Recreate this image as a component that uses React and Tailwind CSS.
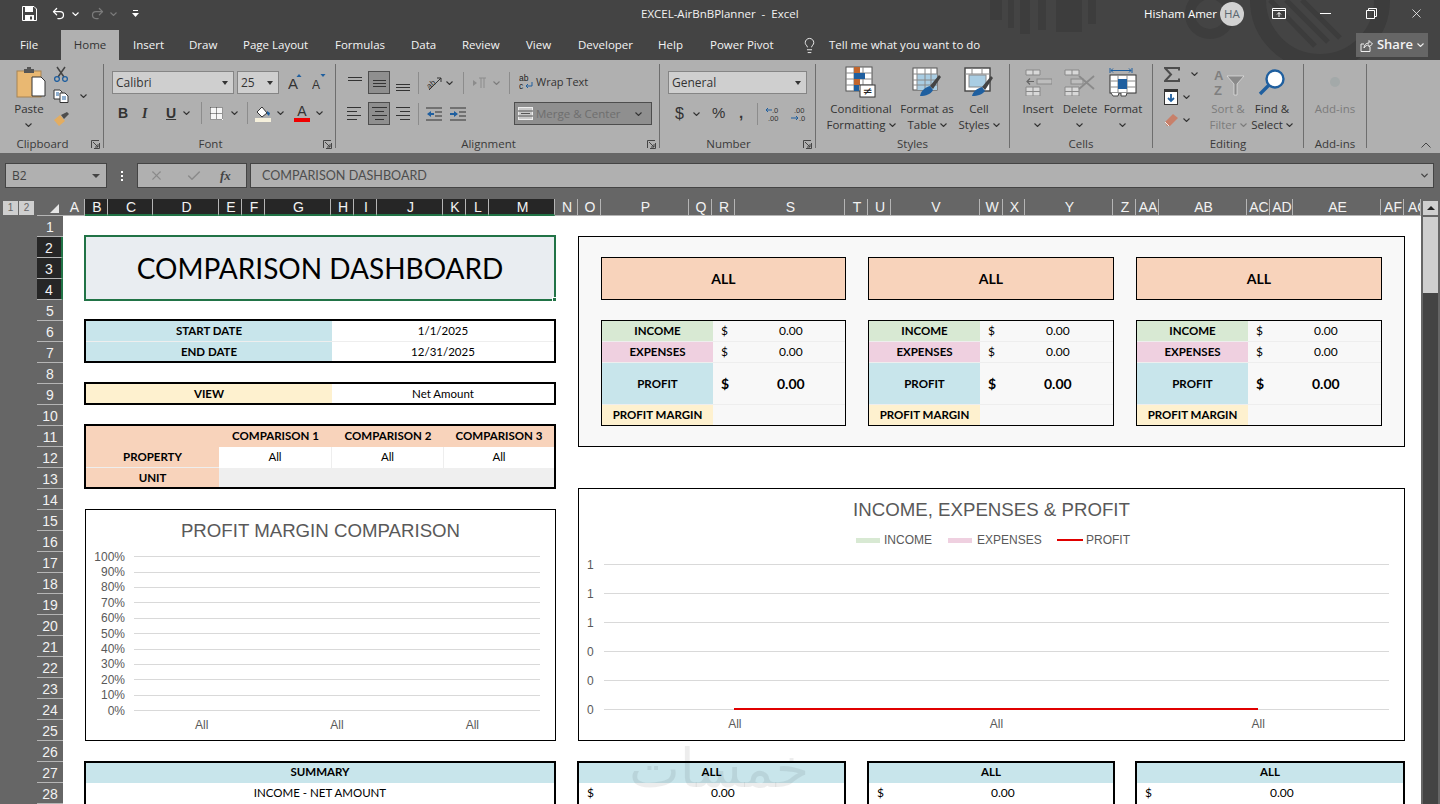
import { ChevronDown, Undo2, Redo2, X, Check, Lightbulb } from 'lucide-react'

const colsList = [
  ['A', 'w-[22px]'], ['B', 'w-[23px]', 1], ['C', 'w-[45px]', 1], ['D', 'w-[66px]', 1], ['E', 'w-[23px]', 1], ['F', 'w-[23px]', 1],
  ['G', 'w-[66px]', 1], ['H', 'w-[23px]', 1], ['I', 'w-[23px]', 1], ['J', 'w-[66px]', 1], ['K', 'w-[23px]', 1], ['L', 'w-[23px]', 1],
  ['M', 'w-[66px]', 1], ['N', 'w-[23px]'], ['O', 'w-[23px]'], ['P', 'w-[88px]'], ['Q', 'w-[23px]'], ['R', 'w-[23px]'], ['S', 'w-[110px]'],
  ['T', 'w-[23px]'], ['U', 'w-[23px]'], ['V', 'w-[89px]'], ['W', 'w-[23px]'], ['X', 'w-[22px]'], ['Y', 'w-[88px]'], ['Z', 'w-[23px]'],
  ['AA', 'w-[23px]'], ['AB', 'w-[88px]'], ['AC', 'w-[23px]'], ['AD', 'w-[23px]'], ['AE', 'w-[88px]'], ['AF', 'w-[23px]'], ['AG', 'w-[17px]'],
]

const tabs = [
  ['Insert', 'w-[29px]'], ['Draw', 'w-[27px]'], ['Page Layout', 'w-[65px]'], ['Formulas', 'w-[49px]'], ['Data', 'w-[24px]'],
  ['Review', 'w-[37px]'], ['View', 'w-[25px]'], ['Developer', 'w-[53px]'], ['Help', 'w-[25px]'], ['Power Pivot', 'w-[63px]'],
]

const rowNums = Array.from({ length: 28 }, (_, i) => i + 1)
const leftTicks = ['100%', '90%', '80%', '70%', '60%', '50%', '40%', '30%', '20%', '10%', '0%']
const rightTicks = ['1', '1', '1', '0', '0', '0']

function Chev({ className = '', color = '#333' }) {
  return (
    <svg width="7" height="4" viewBox="0 0 7 4" className={`shrink-0 ${className}`}>
      <path d="M0.5 0.5 L3.5 3.5 L6.5 0.5" fill="none" stroke={color} strokeWidth="1.1" />
    </svg>
  )
}

function Launcher() {
  return (
    <svg width="9" height="9" viewBox="0 0 9 9" className="absolute right-[3px] top-[4px]">
      <path d="M0.5 8 V0.5 H8 M8.5 3 V8.5 H3 M2 2 L7 7 M4 7 H7 V4" fill="none" stroke="#444" strokeWidth="1" />
    </svg>
  )
}

function Sep({ className = '' }) {
  return <div className={`w-px h-[22px] bg-[#8c8c8c] shrink-0 ${className}`} />
}

function Lines({ rows, className = '' }) {
  return (
    <svg width="15" height="17" viewBox="0 0 15 17" className={`shrink-0 ${className}`}>
      {rows.map(([x1, x2, y]) => (
        <line key={y} x1={x1} x2={x2} y1={y + 0.5} y2={y + 0.5} stroke="#333" />
      ))}
    </svg>
  )
}

function Group({ label, width, launcher, children }) {
  return (
    <div className={`flex flex-col h-[84px] shrink-0 border-r border-[#6e6e6e] ${width}`}>
      <div className="h-[72px] flex min-h-0 shrink-0">{children}</div>
      <div className={`relative h-[12px] leading-[16px] text-center text-[11.5px] text-[#3a3a3a] ${launcher ? 'pr-[18px]' : ''}`}>
        {label}
        {launcher && <Launcher />}
      </div>
    </div>
  )
}

function BigBtn({ width, icon, lines, dim, chevron }) {
  return (
    <div className={`flex flex-col items-center shrink-0 ${width}`}>
      <div className="h-[36px] flex items-center justify-center">{icon}</div>
      <div className={`text-[11.5px] leading-[16px] text-center whitespace-nowrap mt-[1px] ${dim ? 'text-[#7c7c7c]' : 'text-[#333]'}`}>
        {lines.map((l, i) => (
          <div key={l} className="flex items-center justify-center gap-[3px]">
            {l}
            {chevron && i === lines.length - 1 && lines.length > 1 && <Chev color={dim ? '#7c7c7c' : '#333'} />}
          </div>
        ))}
        {chevron && lines.length === 1 && <div className="h-[16px] flex items-center justify-center"><Chev /></div>}
      </div>
    </div>
  )
}

function DropBox({ width, text, className = '' }) {
  return (
    <div className={`h-[23px] flex items-center justify-between px-[3px] bg-[#cfcfcf] border border-[#858585] shrink-0 text-[12px] text-[#333] ${width} ${className}`}>
      <span className="pt-[1px]">{text}</span>
      <svg width="7" height="4" viewBox="0 0 7 4" className="mr-[1px]"><path d="M0 0 H6 L3 4 Z" fill="#333" /></svg>
    </div>
  )
}

function SizeA({ size, up }) {
  return (
    <svg width="14" height="18" viewBox="0 0 14 18" className="shrink-0">
      <text x="0" y="15" fontSize={size} fill="#333" fontFamily="Liberation Sans, sans-serif">A</text>
      <path d={up ? 'M8.5 3 L11 0 L13.5 3 Z' : 'M8.5 0 H13.5 L11 3 Z'} fill="#1f5f9f" />
    </svg>
  )
}

function PasteIcon() {
  return (
    <svg width="30" height="32" viewBox="0 0 30 32">
      <rect x="1" y="5" width="24" height="26" fill="#e9b872" stroke="#a68355" />
      <path d="M8 5 V3 H11 V1 H15 V3 H18 V5 V7 H8 Z" fill="#555" />
      <path d="M16 11 H25 L29 15 V30 H16 Z" fill="#fff" stroke="#333" />
    </svg>
  )
}

function ScissorsIcon() {
  return (
    <svg width="16" height="16" viewBox="0 0 16 16">
      <path d="M4 1 L11 11 M12 1 L5 11" stroke="#444" strokeWidth="1.5" fill="none" />
      <circle cx="4" cy="13" r="2.4" fill="none" stroke="#1f5f9f" strokeWidth="1.3" />
      <circle cx="12" cy="13" r="2.4" fill="none" stroke="#1f5f9f" strokeWidth="1.3" />
    </svg>
  )
}

function CopyIcon() {
  return (
    <svg width="16" height="14" viewBox="0 0 16 14">
      <path d="M1 1 H7 L9 3 V10 H1 Z" fill="#fff" stroke="#333" />
      <path d="M7 4 H12 L15 7 V13.5 H7 Z" fill="#fff" stroke="#333" />
      <path d="M3 4 H6 M3 6 H6 M9 8 H13 M9 10 H13" stroke="#1f5f9f" />
    </svg>
  )
}

function PainterIcon() {
  return (
    <svg width="17" height="16" viewBox="0 0 17 16">
      <path d="M1 9 L7 4 L12 10 L6 15 Z" fill="#e3ad61" />
      <path d="M8 4 L11 8 L16 3 L14 1 Z" fill="#4d4d4d" />
    </svg>
  )
}

function BordersIcon() {
  return (
    <svg width="13" height="13" viewBox="0 0 13 13">
      <rect width="13" height="13" fill="#f6f6f6" />
      <path d="M0.5 0.5 H12.5 M0.5 6.5 H12.5 M0.5 12.5 H12.5 M0.5 0.5 V12.5 M6.5 0.5 V12.5 M12.5 0.5 V12.5" stroke="#333" strokeDasharray="1 1" />
    </svg>
  )
}

function FillIcon() {
  return (
    <svg width="16" height="17" viewBox="0 0 16 17">
      <path d="M2 7 L7 2 L12 8 L7 12 Z" fill="#fff" stroke="#333" />
      <path d="M12 6 L15 8 L14 11 L12 9 Z" fill="#1f5f9f" />
      <rect y="13" width="16" height="4" fill="#f5f0dc" />
    </svg>
  )
}

function CondIcon() {
  return (
    <svg width="32" height="32" viewBox="0 0 32 32">
      <rect x="1" y="1" width="26" height="24" fill="#fff" stroke="#555" />
      <path d="M1 7 H27 M1 13 H27 M1 19 H27 M9 1 V25 M18 1 V25" stroke="#888" />
      <rect x="9" y="1" width="6" height="6" fill="#c2662d" />
      <rect x="9" y="7" width="11" height="6" fill="#1f5f9f" />
      <rect x="9" y="13" width="6" height="6" fill="#c2662d" />
      <rect x="9" y="19" width="5" height="6" fill="#1f5f9f" />
      <rect x="15" y="19" width="15" height="12" fill="#fff" stroke="#333" />
      <text x="22.5" y="29" fontSize="12" textAnchor="middle" fill="#222" fontFamily="DejaVu Sans">≠</text>
    </svg>
  )
}

function TableIcon() {
  return (
    <svg width="30" height="30" viewBox="0 0 30 30">
      <rect x="1" y="1" width="24" height="22" fill="#fff" stroke="#555" />
      <rect x="5" y="7" width="20" height="16" fill="#a9cde3" />
      <path d="M1 7 H25 M1 13 H25 M1 18 H25 M5 1 V23 M13 1 V23 M19 1 V23" stroke="#888" />
      <path d="M18 19 L27 8 L29 10 L21 22 Z" fill="#444" />
      <path d="M8 29 C9 23 14 20 18 19 L21 23 C19 27 14 29 8 29 Z" fill="#1f5f9f" />
    </svg>
  )
}

function StylesIcon() {
  return (
    <svg width="30" height="30" viewBox="0 0 30 30">
      <rect x="1" y="1" width="25" height="23" fill="#fff" stroke="#444" strokeWidth="1.4" />
      <path d="M1 7 H26 M8 1 V7 M18 1 V7" stroke="#888" />
      <rect x="5" y="8" width="17" height="12" fill="#a9cde3" stroke="#888" />
      <path d="M18 20 L27 9 L29 11 L21 23 Z" fill="#444" />
      <path d="M8 29 C9 24 14 21 18 20 L21 24 C19 27 14 29 8 29 Z" fill="#1f5f9f" />
    </svg>
  )
}

function InsertIcon() {
  return (
    <svg width="27" height="27" viewBox="0 0 27 27">
      <path d="M1 1 H15 V6 H1 Z M8 1 V6 M1 18 H15 V27 H1 Z M1 22.5 H15 M8 18 V27" fill="#d8d8d8" stroke="#888" />
      <rect x="12" y="10" width="15" height="5" fill="#bdbdbd" stroke="#888" />
      <path d="M2 12.5 H9 M5 9.5 L2 12.5 L5 15.5" fill="none" stroke="#666" strokeWidth="1.2" />
    </svg>
  )
}

function DeleteIcon() {
  return (
    <svg width="32" height="27" viewBox="0 0 32 27">
      <path d="M1 1 H15 V6 H1 Z M8 1 V6 M1 18 H15 V27 H1 Z M1 22.5 H15 M8 18 V27" fill="#d8d8d8" stroke="#888" />
      <rect x="7" y="10" width="12" height="5" fill="#bdbdbd" stroke="#888" />
      <path d="M15 7 L30 20 M30 7 L15 20" stroke="#8a8a8a" strokeWidth="1.8" />
    </svg>
  )
}

function FormatIcon() {
  return (
    <svg width="28" height="30" viewBox="0 0 28 30">
      <path d="M1 1 V6 M23 1 V6 M2 3.5 H22 M4 1.5 L2 3.5 L4 5.5 M20 1.5 L22 3.5 L20 5.5" fill="none" stroke="#1f5f9f" />
      <rect x="1" y="8" width="26" height="18" fill="#fff" stroke="#333" />
      <path d="M1 14 H27 M1 20 H27 M9 8 V26 M18 8 V26" stroke="#888" />
      <rect x="9" y="12" width="9" height="10" fill="#1f5f9f" />
      <path d="M2 26 L4 29 H9 L10 26 M12 26 L12 29 H17 L18 26" fill="#fff" stroke="#444" />
    </svg>
  )
}

function SortIcon() {
  return (
    <svg width="31" height="28" viewBox="0 0 31 28">
      <text x="1" y="12" fontSize="13" fontWeight="700" fill="#7f7f7f" fontFamily="Liberation Sans, sans-serif">A</text>
      <text x="1" y="27" fontSize="13" fontWeight="700" fill="#7f7f7f" fontFamily="Liberation Sans, sans-serif">Z</text>
      <path d="M14 8 H31 L24 16 V27 H21 V16 Z" fill="#8a8a8a" stroke="#eee" strokeWidth="0.6" />
    </svg>
  )
}

function FindIcon() {
  return (
    <svg width="28" height="28" viewBox="0 0 28 28">
      <circle cx="17" cy="11" r="8.5" fill="#fff" stroke="#1f5f9f" strokeWidth="2.4" />
      <path d="M11 17 L2 26" stroke="#1f5f9f" strokeWidth="3.4" />
    </svg>
  )
}

function Ribbon() {
  return (
    <div className="h-[93px] shrink-0 bg-[#b0b0b0] pt-[4px] flex items-start relative">
      <Group label="Clipboard" width="w-[104px]" launcher>
        <div className="w-[53px] pl-[4px] shrink-0">
          <div className="pl-[1px]"><BigBtn width="w-[48px]" icon={<span className="pl-[3px]"><PasteIcon /></span>} lines={['Paste']} chevron /></div>
        </div>
        <div className="flex flex-col items-start pt-[2px]">
          <ScissorsIcon />
          <div className="flex items-center mt-[7px]"><CopyIcon /><Chev className="ml-[11px]" /></div>
          <div className="mt-[8px]"><PainterIcon /></div>
        </div>
      </Group>

      <Group label="Font" width="w-[232px]" launcher>
        <div className="flex flex-col pt-[7px]">
          <div className="flex items-center pl-[8px]">
            <DropBox width="w-[122px]" text="Calibri" />
            <DropBox width="w-[42px]" text="25" className="ml-[3px]" />
            <div className="ml-[9px]"><SizeA size="15" up /></div>
            <div className="ml-[10px]"><SizeA size="12" /></div>
          </div>
          <div className="flex items-center h-[22px] mt-[8px] text-[14px] text-[#333]">
            <span className="ml-[14px] w-[8px] font-bold font-['Liberation_Sans',sans-serif]">B</span>
            <span className="ml-[16px] w-[8px] italic font-['Liberation_Serif',serif] font-bold">I</span>
            <span className="ml-[16px] w-[9px] underline font-bold font-['Liberation_Sans',sans-serif]">U</span>
            <Chev className="ml-[8px]" />
            <Sep className="ml-[11px]" />
            <div className="ml-[8px]"><BordersIcon /></div>
            <Chev className="ml-[8px]" />
            <Sep className="ml-[9px]" />
            <div className="ml-[7px]"><FillIcon /></div>
            <Chev className="ml-[6px]" />
            <div className="ml-[10px] w-[16px] flex flex-col items-center">
              <span className="text-[14px] leading-[13px] font-['Liberation_Sans',sans-serif]">A</span>
              <span className="w-[16px] h-[4px] bg-[#f00000]" />
            </div>
            <Chev className="ml-[6px]" />
          </div>
        </div>
      </Group>

      <Group label="Alignment" width="w-[324px]" launcher>
        <div className="flex flex-col pt-[7px]">
          <div className="flex items-center h-[23px]">
            <Lines className="ml-[12px]" rows={[[0, 14, 3], [0, 14, 6]]} />
            <div className="ml-[5px] w-[22px] h-[23px] bg-[#8f8f8f] border border-[#4d4d4d] flex items-center justify-center shrink-0"><Lines rows={[[1, 14, 6], [1, 14, 9], [1, 14, 12]]} /></div>
            <Lines className="ml-[6px]" rows={[[0, 14, 10], [0, 14, 13], [0, 14, 16]]} />
            <Sep className="ml-[7px]" />
            <svg width="16" height="16" viewBox="0 0 16 16" className="ml-[7px] shrink-0">
              <text x="0" y="11" fontSize="8" fill="#333" transform="rotate(-40 6 8)" fontFamily="Liberation Sans, sans-serif">ab</text>
              <path d="M3 15 L15 3 M11 3 H15 V7" fill="none" stroke="#333" />
            </svg>
            <Chev className="ml-[4px]" />
            <Sep className="ml-[10px]" />
            <svg width="14" height="12" viewBox="0 0 14 12" className="ml-[9px] shrink-0"><path d="M4 6 L0 3 V9 Z" fill="#8c8c8c" /><path d="M8 1 V11 M11 1 V11 M6 1 H13" stroke="#8c8c8c" /></svg>
            <Chev className="ml-[6px]" color="#7c7c7c" />
            <Sep className="ml-[9px]" />
            <svg width="14" height="17" viewBox="0 0 14 17" className="ml-[9px] shrink-0">
              <text x="0" y="7" fontSize="8.5" fill="#222" fontFamily="Liberation Sans, sans-serif">ab</text>
              <text x="0" y="15" fontSize="8.5" fill="#222" fontFamily="Liberation Sans, sans-serif">c</text>
              <path d="M13 8 V12 H7 M9 10 L7 12 L9 14" fill="none" stroke="#1f5f9f" />
            </svg>
            <span className="ml-[3px] text-[11px] text-[#333] whitespace-nowrap">Wrap Text</span>
          </div>
          <div className="flex items-center h-[23px] mt-[8px]">
            <Lines className="ml-[11px]" rows={[[0, 14, 2], [0, 10, 6], [0, 14, 10], [0, 10, 14]]} />
            <div className="ml-[6px] w-[22px] h-[23px] bg-[#8f8f8f] border border-[#4d4d4d] flex items-center justify-center shrink-0"><Lines rows={[[0, 15, 2], [3, 12, 6], [0, 15, 10], [3, 12, 14]]} /></div>
            <Lines className="ml-[6px]" rows={[[0, 14, 2], [4, 14, 6], [0, 14, 10], [4, 14, 14]]} />
            <Sep className="ml-[7px]" />
            <svg width="16" height="14" viewBox="0 0 16 14" className="ml-[7px] shrink-0"><path d="M0 1 H16 M9 5 H16 M9 9 H16 M0 13 H16" stroke="#333" /><path d="M1 7 L5 4 V6 H8 V8 H5 V10 Z" fill="#1f5f9f" /></svg>
            <svg width="16" height="14" viewBox="0 0 16 14" className="ml-[8px] shrink-0"><path d="M0 1 H16 M9 5 H16 M9 9 H16 M0 13 H16" stroke="#333" /><path d="M8 7 L4 4 V6 H0 V8 H4 V10 Z" fill="#1f5f9f" /></svg>
            <div className="ml-[48px] w-[138px] h-[23px] bg-[#8f8f8f] border border-[#4d4d4d] flex items-center shrink-0 text-[11.5px] text-[#6e6e6e]">
              <svg width="15" height="13" viewBox="0 0 15 13" className="ml-[3px] shrink-0"><rect x="0.5" y="0.5" width="14" height="12" fill="#c9c9c9" stroke="#eee" /><path d="M0 4 H15 M0 9 H15 M3 6.5 H12" stroke="#555" /></svg>
              <span className="ml-[3px] whitespace-nowrap">Merge &amp; Center</span>
              <Chev className="ml-auto mr-[9px]" color="#333" />
            </div>
          </div>
        </div>
      </Group>

      <Group label="Number" width="w-[156px]" launcher>
        <div className="flex flex-col pt-[7px]">
          <DropBox width="w-[139px]" text="General" className="ml-[8px]" />
          <div className="flex items-center h-[23px] mt-[8px] text-[#333]">
            <span className="ml-[15px] w-[9px] text-[16px] font-['Liberation_Sans',sans-serif]">$</span>
            <Chev className="ml-[9px]" />
            <span className="ml-[12px] w-[14px] text-[15px] font-['Liberation_Sans',sans-serif]">%</span>
            <span className="ml-[13px] w-[5px] text-[15px] font-bold font-['Liberation_Sans',sans-serif]">,</span>
            <Sep className="ml-[13px]" />
            <svg width="16" height="16" viewBox="0 0 16 16" className="ml-[8px] shrink-0">
              <text x="6" y="7" fontSize="7.5" fill="#333" fontFamily="Liberation Sans, sans-serif">.0</text>
              <text x="2" y="15" fontSize="7.5" fill="#333" fontFamily="Liberation Sans, sans-serif">.00</text>
              <path d="M0 4 H6 M2 2 L0 4 L2 6" fill="none" stroke="#1f5f9f" />
            </svg>
            <svg width="16" height="16" viewBox="0 0 16 16" className="ml-[9px] shrink-0">
              <text x="3" y="7" fontSize="7.5" fill="#333" fontFamily="Liberation Sans, sans-serif">.00</text>
              <text x="8" y="15" fontSize="7.5" fill="#333" fontFamily="Liberation Sans, sans-serif">.0</text>
              <path d="M0 12 H7 M5 10 L7 12 L5 14" fill="none" stroke="#1f5f9f" />
            </svg>
          </div>
        </div>
      </Group>

      <Group label="Styles" width="w-[194px]">
        <div className="flex pl-[6px]">
          <BigBtn width="w-[78px]" icon={<CondIcon />} lines={['Conditional', 'Formatting']} chevron />
          <BigBtn width="w-[54px]" icon={<TableIcon />} lines={['Format as', 'Table']} chevron />
          <BigBtn width="w-[50px]" icon={<StylesIcon />} lines={['Cell', 'Styles']} chevron />
        </div>
      </Group>

      <Group label="Cells" width="w-[143px]">
        <div className="flex pl-[8px]">
          <BigBtn width="w-[40px]" icon={<InsertIcon />} lines={['Insert']} chevron />
          <BigBtn width="w-[44px]" icon={<DeleteIcon />} lines={['Delete']} chevron />
          <BigBtn width="w-[42px]" icon={<FormatIcon />} lines={['Format']} chevron />
        </div>
      </Group>

      <Group label="Editing" width="w-[151px]">
        <div className="flex">
          <div className="w-[55px] pl-[11px] pt-[2px] flex flex-col shrink-0">
            <div className="flex items-center h-[16px]">
              <svg width="16" height="15" viewBox="0 0 16 15" className="shrink-0"><path d="M15 3.5 V1 H1 L7 7.5 L1 14 H15 V11.5" fill="none" stroke="#4d4d4d" strokeWidth="2" /></svg>
              <Chev className="ml-[11px]" />
            </div>
            <div className="flex items-center h-[16px] mt-[7px]">
              <svg width="14" height="16" viewBox="0 0 14 16"><rect x="0.5" y="0.5" width="13" height="15" fill="#fff" stroke="#333" /><rect width="14" height="3" fill="#333" /><path d="M7 5 V12 M4 9 L7 12 L10 9" fill="none" stroke="#1f5f9f" strokeWidth="1.8" /></svg>
              <Chev className="ml-[5px]" />
            </div>
            <div className="flex items-center h-[16px] mt-[7px]">
              <svg width="14" height="14" viewBox="0 0 14 14"><path d="M1 9 L9 1 L14 5 L6 13 H3 Z" fill="#c8806a" /><path d="M1 9 L5 13" stroke="#eee" /></svg>
              <Chev className="ml-[5px]" />
            </div>
          </div>
          <BigBtn width="w-[40px]" icon={<SortIcon />} lines={['Sort &', 'Filter']} dim chevron />
          <BigBtn width="w-[48px]" icon={<FindIcon />} lines={['Find &', 'Select']} chevron />
        </div>
      </Group>

      <Group label="Add-ins" width="w-[63px]">
        <BigBtn width="w-[62px]" icon={<span className="w-[10px] h-[10px] rounded-full bg-[#a3a9a9]" />} lines={['Add-ins']} dim />
      </Group>

      <svg width="10" height="6" viewBox="0 0 10 6" className="absolute right-[9px] bottom-[5px]"><path d="M0.5 5.5 L5 1 L9.5 5.5" fill="none" stroke="#444" /></svg>
    </div>
  )
}

function TopBars() {
  return (
    <div className="relative shrink-0 bg-[#444444] text-white overflow-hidden">
      {/* faded Office art behind the bars */}
      <svg width="470" height="60" viewBox="0 0 470 60" className="absolute right-0 top-0">
        <g fill="#3d3d3d">
          <rect x="20" y="0" width="12" height="20" />
          <rect x="38" y="0" width="6" height="28" />
          <rect x="50" y="0" width="10" height="34" />
          <rect x="68" y="0" width="8" height="30" />
          <rect x="86" y="0" width="26" height="32" />
          <rect x="118" y="0" width="8" height="24" />
        </g>
        <circle cx="240" cy="14" r="20" fill="none" stroke="#3d3d3d" strokeWidth="10" />
        <circle cx="350" cy="0" r="62" fill="none" stroke="#3c3c3c" strokeWidth="16" />
        <path d="M300 0 L345 46 M316 0 L358 42 M332 0 L370 38" stroke="#3c3c3c" strokeWidth="5" />
      </svg>

      {/* title bar */}
      <div className="relative h-[30px] pb-[3px] flex items-center text-[11.5px]">
        <svg width="15" height="15" viewBox="0 0 15 15" className="ml-[22px] shrink-0">
          <path d="M0.5 0.5 H12 L14.5 3 V14.5 H0.5 Z" fill="none" stroke="#fff" />
          <rect x="3" y="0.5" width="8" height="5.5" fill="#fff" />
          <rect x="3" y="9" width="9" height="5.5" fill="#fff" />
          <rect x="8" y="10.5" width="2" height="3" fill="#444" />
        </svg>
        <Undo2 size={15} strokeWidth={2} className="ml-[14px] shrink-0" />
        <Chev className="ml-[6px]" color="#fff" />
        <Redo2 size={15} strokeWidth={2} className="ml-[11px] shrink-0 text-[#7b7b7b]" />
        <Chev className="ml-[5px]" color="#7b7b7b" />
        <svg width="7" height="7" viewBox="0 0 7 7" className="ml-[15px] shrink-0"><path d="M1 0.5 H6" stroke="#fff" /><path d="M0 3 H7 L3.5 7 Z" fill="#fff" /></svg>
        <span className="ml-[502px] w-[190px] shrink-0 whitespace-pre text-[#f2f2f2]">EXCEL-AirBnBPlanner  -  Excel</span>
        <span className="ml-[313px] w-[70px] shrink-0 whitespace-nowrap">Hisham Amer</span>
        <span className="ml-[6px] w-[24px] h-[24px] rounded-full bg-[#d2d2d2] text-[#5b6770] flex items-center justify-center shrink-0">HA</span>
        <svg width="14" height="11" viewBox="0 0 14 11" className="ml-[28px] shrink-0"><path d="M0.5 0.5 H13.5 V10.5 H0.5 Z M0.5 2.5 H13.5" fill="none" stroke="#fff" /><path d="M7 9 V4.5 M5 6.5 L7 4.5 L9 6.5" fill="none" stroke="#fff" /></svg>
        <span className="ml-[34px] w-[11px] h-px bg-white shrink-0" />
        <svg width="11" height="11" viewBox="0 0 11 11" className="ml-[35px] shrink-0"><path d="M0.5 2.5 H8.5 V10.5 H0.5 Z M2.5 2.5 V0.5 H10.5 V8.5 H8.5" fill="none" stroke="#fff" /></svg>
        <X size={15} strokeWidth={1.2} className="ml-[32px] shrink-0" />
      </div>

      {/* tabs */}
      <div className="relative h-[30px] flex items-center text-[11.5px] text-[#f4f4f4]">
        <span className="ml-[20px] w-[18px] shrink-0">File</span>
        <span className="ml-[23px] w-[58px] h-full shrink-0 bg-[#b0b0b0] text-[#333] flex items-center justify-center">Home</span>
        <div className="flex items-center gap-[27px] ml-[14px]">
          {tabs.map(([t, w]) => (
            <span key={t} className={`shrink-0 whitespace-nowrap text-center ${w}`}>{t}</span>
          ))}
        </div>
        <Lightbulb size={17} strokeWidth={1.3} className="ml-[28px] shrink-0" />
        <span className="ml-[11px] w-[150px] shrink-0 whitespace-nowrap">Tell me what you want to do</span>
        <div className="ml-[377px] w-[72px] h-[24px] bg-[#666666] flex items-center justify-center gap-[4px] shrink-0 text-[13px] font-semibold">
          <svg width="13" height="13" viewBox="0 0 13 13"><path d="M4 5 H1 V12.5 H10 V8" fill="none" stroke="#eee" /><path d="M4 9 C4 6 6 4 9 4 V1.5 L12.5 5 L9 8 V6 C7 6 5 7 4 9 Z" fill="none" stroke="#eee" /></svg>
          <span>Share</span>
          <Chev color="#eee" />
        </div>
      </div>
    </div>
  )
}

function FormulaBar() {
  return (
    <div className="h-[46px] shrink-0 bg-[#666666] pt-[10px] pb-[11px] flex items-stretch font-['Open_Sans',sans-serif]">
      <div className="ml-[5px] w-[102px] bg-[#b0b0b0] border border-[#444] flex items-center justify-between pl-[6px] pr-[6px] text-[12px] text-[#444]">
        <span className="pt-[1px]">B2</span>
        <svg width="8" height="4" viewBox="0 0 8 4"><path d="M0 0 H8 L4 4 Z" fill="#444" /></svg>
      </div>
      <div className="w-[30px] flex flex-col items-center justify-center gap-[2px]">
        <span className="w-[2px] h-[2px] bg-white" />
        <span className="w-[2px] h-[2px] bg-white" />
        <span className="w-[2px] h-[2px] bg-white" />
      </div>
      <div className="w-[110px] bg-[#b0b0b0] border border-[#444] flex items-center pl-[11px] text-[#444]">
        <X size={15} strokeWidth={1.8} className="text-[#8a8a8a]" />
        <Check size={16} strokeWidth={2.2} className="ml-[22px] text-[#8a8a8a]" />
        <span className="ml-[18px] italic font-bold text-[13px] font-['Liberation_Serif',serif]">fx</span>
      </div>
      <div className="ml-[3px] w-[1184px] bg-[#b0b0b0] border border-[#444] flex items-center pl-[11px] text-[#4d4d4d] text-[12.6px] font-['Lato',sans-serif]">
        <span className="pt-[2px]">COMPARISON DASHBOARD</span>
        <ChevronDown size={11} strokeWidth={3} className="ml-auto mr-[3px] text-[#444]" />
      </div>
    </div>
  )
}

function ColumnHeaders() {
  return (
    <div className="h-[17px] shrink-0 bg-[#666666] flex items-stretch font-['Liberation_Sans',sans-serif] text-[14px] text-[#f2f2f2]">
      <div className="w-[37px] shrink-0 flex items-center pl-[3px] gap-px text-[10px] text-[#666]">
        <span className="w-[15px] h-[14px] bg-[#cfcfcf] flex items-center justify-center">1</span>
        <span className="w-[15px] h-[14px] bg-[#cfcfcf] flex items-center justify-center">2</span>
      </div>
      <div className="w-[26px] shrink-0 border-b border-[#b5b5b5] flex items-end justify-end pr-[4px] pb-[2px]">
        <svg width="9" height="9" viewBox="0 0 9 9"><path d="M9 0 V9 H0 Z" fill="#e6e6e6" /></svg>
      </div>
      {colsList.map(([c, w, sel]) => (
        <div
          key={c}
          className={`shrink-0 overflow-hidden flex items-center leading-none border-r border-[#b5b5b5] ${c === 'AG' ? 'justify-start pl-[4px]' : 'justify-center pl-[2px]'} ${w} ${sel ? 'bg-[#262626] border-b-2 border-b-[#217346]' : 'border-b border-b-[#b5b5b5]'}`}
        >
          {c}
        </div>
      ))}
      <div className="w-[19px] shrink-0 pl-[2px] pt-[2px]">
        <div className="w-[15px] h-[14px] bg-[#cfcfcf] flex items-center justify-center">
          <svg width="8" height="4" viewBox="0 0 8 4"><path d="M0 4 H8 L4 0 Z" fill="#222" /></svg>
        </div>
      </div>
    </div>
  )
}

function RowHeaders() {
  return (
    <div className="w-[63px] shrink-0 bg-[#666666] pl-[37px] font-['Liberation_Sans',sans-serif] text-[14px] text-[#f2f2f2]">
      {rowNums.map((n) => {
        const sel = n >= 2 && n <= 4
        return (
          <div
            key={n}
            className={`h-[21px] pt-[3px] flex items-center justify-center border-b border-[#b5b5b5] ${sel ? 'bg-[#262626] border-r-2 border-r-[#217346]' : ''}`}
          >
            {n}
          </div>
        )
      })}
    </div>
  )
}

function Cell({ className = '', children }) {
  return <div className={`flex items-center justify-center ${className}`}>{children}</div>
}

function Inputs() {
  return (
    <>
      <div className="mt-[18px] h-[44px] border-2 border-black grid grid-cols-[246px_1fr] grid-rows-[21px_19px] text-[11.5px] text-black">
        <Cell className="bg-[#c8e5eb] font-bold border-b border-[#eeeeee]">START DATE</Cell>
        <Cell className="border-b border-[#eeeeee]">1/1/2025</Cell>
        <Cell className="bg-[#c8e5eb] font-bold">END DATE</Cell>
        <Cell>12/31/2025</Cell>
      </div>
      <div className="mt-[19px] h-[23px] border-2 border-black grid grid-cols-[246px_1fr] text-[11.5px] text-black">
        <Cell className="bg-[#fef1cf] font-bold">VIEW</Cell>
        <Cell>Net Amount</Cell>
      </div>
      <div className="mt-[19px] h-[65px] border-2 border-black grid grid-cols-[133px_113px_112px_1fr] grid-rows-[21px_21px_19px] text-[11.5px] text-black">
        <Cell className="bg-[#f8d3bb]" />
        <Cell className="bg-[#f8d3bb] font-bold pb-[2px]">COMPARISON 1</Cell>
        <Cell className="bg-[#f8d3bb] font-bold pb-[2px]">COMPARISON 2</Cell>
        <Cell className="bg-[#f8d3bb] font-bold pb-[2px]">COMPARISON 3</Cell>
        <Cell className="bg-[#f8d3bb] font-bold border-b border-[#eeeeee]">PROPERTY</Cell>
        <Cell className="border-r border-[#eeeeee] pb-[2px]">All</Cell>
        <Cell className="border-r border-[#eeeeee] pb-[2px]">All</Cell>
        <Cell className="pb-[2px]">All</Cell>
        <Cell className="bg-[#f8d3bb] font-bold">UNIT</Cell>
        <Cell className="bg-[#efefef]" />
        <Cell className="bg-[#efefef]" />
        <Cell className="bg-[#efefef]" />
      </div>
    </>
  )
}

function MarginChart() {
  return (
    <div className="mt-[20px] ml-px w-[471px] h-[232px] border border-black bg-white font-['Liberation_Sans',sans-serif] text-[#595959]">
      <div className="h-[39px] pt-[10px] text-center text-[18.67px] leading-[22px]">PROFIT MARGIN COMPARISON</div>
      <div className="flex flex-col">
        {leftTicks.map((t) => (
          <div key={t} className="h-[15.4px] flex items-center text-[12px]">
            <span className="w-[39px] text-right shrink-0">{t}</span>
            <span className="ml-[9px] w-[406px] h-px bg-[#d9d9d9]" />
          </div>
        ))}
      </div>
      <div className="ml-[48px] w-[406px] grid grid-cols-3 text-center text-[12px] leading-[14px]">
        <span>All</span><span>All</span><span>All</span>
      </div>
    </div>
  )
}

function Money({ bold }) {
  return (
    <div className={`flex items-center h-full pl-[8px] ${bold ? 'font-bold text-[14px]' : 'text-[12px]'}`}>
      <span className={`shrink-0 ${bold ? 'w-[56px]' : 'w-[58px]'}`}>$</span>
      <span>0.00</span>
    </div>
  )
}

function CompareCard() {
  return (
    <div>
      <div className="h-[43px] border border-black bg-[#f8d3bb] flex items-center justify-center font-bold text-[14px]">ALL</div>
      <div className="mt-[20px] h-[106px] border border-black grid grid-cols-[111px_1fr] grid-rows-[21px_21px_42px_20px] text-[11.5px]">
        <Cell className="bg-[#d8e9d3] font-bold border-b border-[#eeeeee]">INCOME</Cell>
        <div className="border-b border-[#eeeeee]"><Money /></div>
        <Cell className="bg-[#efd0e0] font-bold border-b border-[#eeeeee]">EXPENSES</Cell>
        <div className="border-b border-[#eeeeee]"><Money /></div>
        <Cell className="bg-[#c8e5eb] font-bold border-b border-[#eeeeee]">PROFIT</Cell>
        <div className="border-b border-[#eeeeee]"><Money bold /></div>
        <Cell className="bg-[#fef1cf] font-bold">PROFIT MARGIN</Cell>
        <div />
      </div>
    </div>
  )
}

function TrendChart() {
  return (
    <div className="mt-[41px] h-[253px] border border-black bg-white font-['Liberation_Sans',sans-serif] text-[#595959]">
      <div className="pt-[10px] text-center text-[18.67px] leading-[22px]">INCOME, EXPENSES &amp; PROFIT</div>
      <div className="mt-[11px] h-[16px] flex items-center text-[12px] pl-[277px]">
        <span className="w-[24px] h-[5px] bg-[#d8e9d3]" />
        <span className="ml-[4px] w-[64px]">INCOME</span>
        <span className="w-[24px] h-[5px] bg-[#efd0e0]" />
        <span className="ml-[5px] w-[80px]">EXPENSES</span>
        <span className="w-[26px] h-[2px] bg-[#e00000]" />
        <span className="ml-[3px]">PROFIT</span>
      </div>
      <div className="mt-[2px]">
        {rightTicks.map((t, i) => (
          <div key={i} className="h-[29px] flex items-center text-[12px]">
            <span className="ml-[8px] w-[8px] shrink-0">{t}</span>
            <span className="relative ml-[9px] w-[785px] h-px bg-[#d9d9d9]">
              {i === 5 && <span className="absolute left-[130px] -top-px w-[524px] h-[2px] bg-[#e00000]" />}
            </span>
          </div>
        ))}
      </div>
      <div className="-mt-[7px] ml-[25px] w-[785px] grid grid-cols-3 text-center text-[12px] leading-[14px]">
        <span>All</span><span>All</span><span>All</span>
      </div>
    </div>
  )
}

function SummaryCard({ className, amountGap }) {
  return (
    <div className={`border-2 border-b-0 border-black text-[11.5px] ${className}`}>
      <div className="h-[20px] pb-[2px] bg-[#c8e5eb] flex items-center justify-center font-bold">ALL</div>
      <div className="h-[21px] pb-px flex items-center pl-[8px] text-[12px]">
        <span className={amountGap}>$</span>
        <span>0.00</span>
      </div>
    </div>
  )
}

function Sheet() {
  return (
    <div className="flex-1 min-h-0 flex overflow-hidden font-['Lato',sans-serif] text-black">
      <RowHeaders />
      <div className="relative w-[1358px] shrink-0 bg-white flex">
        {/* left column */}
        <div className="ml-[21px] w-[472px] pt-[19px] shrink-0">
          <div className="relative h-[66px] border-2 border-[#217346] bg-[#e9edf1] flex items-center justify-center text-[28px] leading-none">
            COMPARISON DASHBOARD
            <span className="absolute -right-[3px] -bottom-[3px] w-[5px] h-[5px] bg-[#217346] border border-white" />
          </div>
          <Inputs />
          <MarginChart />
          <div className="mt-[20px] border-2 border-b-0 border-black text-[11.5px]">
            <div className="h-[20px] pb-[2px] bg-[#c8e5eb] flex items-center justify-center font-bold">SUMMARY</div>
            <div className="h-[21px] pb-px flex items-center justify-center">INCOME - NET AMOUNT</div>
          </div>
        </div>

        {/* right column */}
        <div className="ml-[22px] w-[827px] pt-[20px] shrink-0">
          <div className="h-[211px] border border-black bg-[#f8f8f8] pl-[22px] pr-[22px] pt-[20px] grid grid-cols-[245px_246px_246px] gap-[22px] content-start">
            <CompareCard />
            <CompareCard />
            <CompareCard />
          </div>
          <TrendChart />
          <div className="mt-[20px] -ml-px flex">
            <SummaryCard className="w-[269px]" amountGap="w-[124px]" />
            <SummaryCard className="ml-[21px] w-[248px]" amountGap="w-[114px]" />
            <SummaryCard className="ml-[20px] w-[270px]" amountGap="w-[125px]" />
          </div>
        </div>

        {/* site watermark */}
        <span className="absolute left-[566px] top-[526px] text-[54px] leading-none text-black/[0.07] font-['DejaVu_Sans',sans-serif] pointer-events-none">خمسات</span>
      </div>
      <div className="w-[19px] shrink-0 bg-[#666666] pl-[2px] pt-px flex flex-col">
        <div className="w-[15px] h-[76px] bg-[#cfcfcf]" />
        <div className="w-[15px] flex-1 bg-[#444444]" />
      </div>
    </div>
  )
}

export default function App() {
  return (
    <div className="w-[1440px] h-[804px] overflow-hidden flex flex-col bg-[#666666] font-['Open_Sans',sans-serif]">
      <TopBars />
      <Ribbon />
      <FormulaBar />
      <ColumnHeaders />
      <Sheet />
    </div>
  )
}
